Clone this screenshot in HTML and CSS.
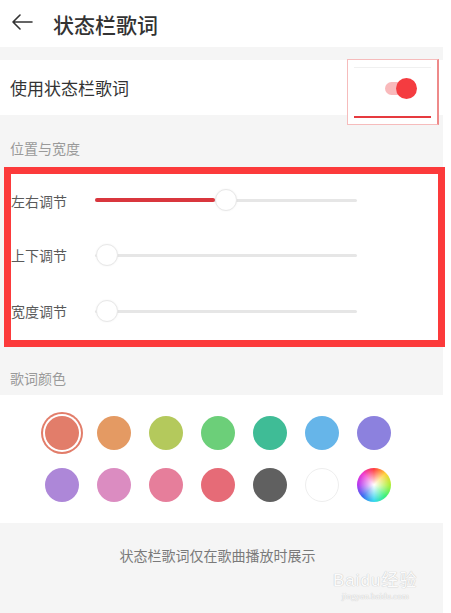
FILE: index.html
```html
<!DOCTYPE html>
<html lang="zh">
<head>
<meta charset="utf-8">
<link rel="stylesheet" href="styles.css">
</head>
<body>
<div class="page">
  <header class="header">
    <svg class="back" width="22" height="16" viewBox="0 0 22 16"><path d="M21 8H2M9 1L2 8l7 7" fill="none" stroke="#333" stroke-width="1.6" stroke-linecap="round" stroke-linejoin="round"/></svg>
    <h1 class="title">状态栏歌词</h1>
  </header>
  <div class="gap"></div>
  <div class="row-toggle">
    <span class="row-label">使用状态栏歌词</span>
    <div class="mark-box">
      <div class="mark-inner">
        <div class="toggle"><span class="knob"></span></div>
      </div>
    </div>
  </div>
  <div class="section-label first">位置与宽度</div>
  <div class="highlight">
    <div class="slider-row">
      <span class="slider-label">左右调节</span>
      <div class="track"><div class="fill" style="width:120px"></div><span class="thumb" style="left:120px"></span></div>
    </div>
    <div class="slider-row">
      <span class="slider-label">上下调节</span>
      <div class="track"><span class="thumb" style="left:1px"></span></div>
    </div>
    <div class="slider-row">
      <span class="slider-label">宽度调节</span>
      <div class="track"><span class="thumb" style="left:1px"></span></div>
    </div>
  </div>
  <div class="section-label second">歌词颜色</div>
  <div class="colors">
    <span class="dot selected" style="background:#e27d6a"></span>
    <span class="dot" style="background:#e49a63"></span>
    <span class="dot" style="background:#b4c95c"></span>
    <span class="dot" style="background:#6ccf79"></span>
    <span class="dot" style="background:#3fbc96"></span>
    <span class="dot" style="background:#66b5e9"></span>
    <span class="dot" style="background:#8c81de"></span>
    <span class="dot" style="background:#ad87d8"></span>
    <span class="dot" style="background:#db8cc1"></span>
    <span class="dot" style="background:#e67e9b"></span>
    <span class="dot" style="background:#e66b77"></span>
    <span class="dot" style="background:#606060"></span>
    <span class="dot white"></span>
    <span class="dot rainbow"></span>
  </div>
  <footer class="footer">
    <p class="note">状态栏歌词仅在歌曲播放时展示</p>
    <div class="watermark"><span class="wm-big">Baidu经验</span><span class="wm-small">jingyan.baidu.com</span></div>
  </footer>
</div>
</body>
</html>
```

FILE: styles.css
```css
* { box-sizing: border-box; }
html, body { margin: 0; padding: 0; background: #fff; }
body {
  width: 451px;
  height: 613px;
  overflow: hidden;
  font-family: "Noto Sans CJK SC", "Noto Sans", sans-serif;
}
.page {
  width: 443px;
  background: #f5f5f5;
  min-height: 613px;
}
.header {
  height: 47px;
  background: #fff;
  display: flex;
  align-items: center;
  padding-left: 11px;
}
.back { display: block; margin-top: -4px; }
.title {
  margin: 0 0 0 20px;
  font-size: 21px;
  font-weight: 500;
  color: #333;
  line-height: 28px;
}
.gap { height: 13px; }
.row-toggle {
  position: relative;
  height: 55px;
  background: #fff;
  display: flex;
  align-items: center;
  padding-left: 10px;
}
.row-label { font-size: 17px; color: #333; }
.mark-box {
  position: absolute;
  left: 347px;
  top: -1px;
  width: 92px;
  height: 66px;
  background: #fff;
  border: 1px solid #f6bcbc;
  border-right: 2px solid #ee8a8a;
  z-index: 2;
}
.mark-inner {
  position: absolute;
  left: 6px;
  top: 7px;
  width: 77px;
  height: 51px;
  border-top: 1px solid #f0f0f0;
  border-bottom: 2px solid #e63a3f;
}
.toggle {
  position: absolute;
  left: 31px;
  top: 14px;
  width: 26px;
  height: 13px;
  border-radius: 7px;
  background: #f9b9bb;
}
.knob {
  position: absolute;
  left: 11px;
  top: -4px;
  width: 21px;
  height: 21px;
  border-radius: 50%;
  background: #f43c40;
}
.section-label {
  font-size: 14px;
  color: #9a9a9a;
  line-height: 16px;
}
.section-label.first { height: 52px; padding: 25px 0 0 10px; }
.section-label.second { height: 48px; padding: 23px 0 0 10px; }
.highlight {
  margin-left: 4px;
  width: 441px;
  height: 180px;
  border: 7px solid #fc3a3b;
  background: #fff;
  padding-top: 0;
}
.slider-row {
  height: 56px;
  display: flex;
  align-items: center;
}
.slider-row:first-child { height: 53px; }
.slider-label {
  width: 84px;
  font-size: 14px;
  color: #5a5a5a;
}
.track {
  position: relative;
  width: 262px;
  height: 3px;
  border-radius: 2px;
  background: #e6e6e6;
}
.fill {
  position: absolute;
  left: 0;
  top: -1px;
  height: 4px;
  border-radius: 2px;
  background: #d9363d;
}
.thumb {
  position: absolute;
  top: -10px;
  width: 22px;
  height: 22px;
  border-radius: 50%;
  background: #fff;
  border: 1px solid #e8e8e8;
  box-shadow: 0 0 2px rgba(0,0,0,0.06);
}
.colors {
  height: 128px;
  background: #fff;
  display: grid;
  grid-template-columns: repeat(7, 52px);
  grid-auto-rows: 34px;
  row-gap: 18px;
  padding: 21px 0 0 36px;
  justify-items: center;
}
.dot {
  display: block;
  width: 34px;
  height: 34px;
  border-radius: 50%;
}
.dot.selected {
  box-shadow: 0 0 0 2px #fff, 0 0 0 4px #e27d6a;
}
.dot.white { background: #fff; border: 1px solid #eeeeee; }
.dot.rainbow {
  background:
    radial-gradient(circle, #fff 0%, rgba(255,255,255,0.6) 25%, rgba(255,255,255,0) 65%),
    conic-gradient(#ff4040, #ffd23a, #aef03a, #3af07a, #3ad9f0, #3a6cf0, #b43af0, #f03ad0, #ff4040);
}
.footer {
  position: relative;
  height: 90px;
}
.note {
  margin: 0;
  padding-top: 22px;
  text-align: center;
  padding-right: 8px;
  font-size: 14px;
  line-height: 20px;
  color: #7a7a7a;
}
.watermark {
  position: absolute;
  left: 333px;
  top: 48px;
  display: flex;
  flex-direction: column;
  align-items: center;
  color: #fbfbfb;
  text-shadow: 0 0 1px #c8c8c8, 0 0 1px #c8c8c8;
  font-family: "Liberation Sans", "Noto Sans CJK SC", sans-serif;
}
.wm-big { font-size: 17px; line-height: 20px; letter-spacing: 1px; }
.wm-small { font-size: 9px; line-height: 11px; font-family: "Liberation Serif", serif; }
```
